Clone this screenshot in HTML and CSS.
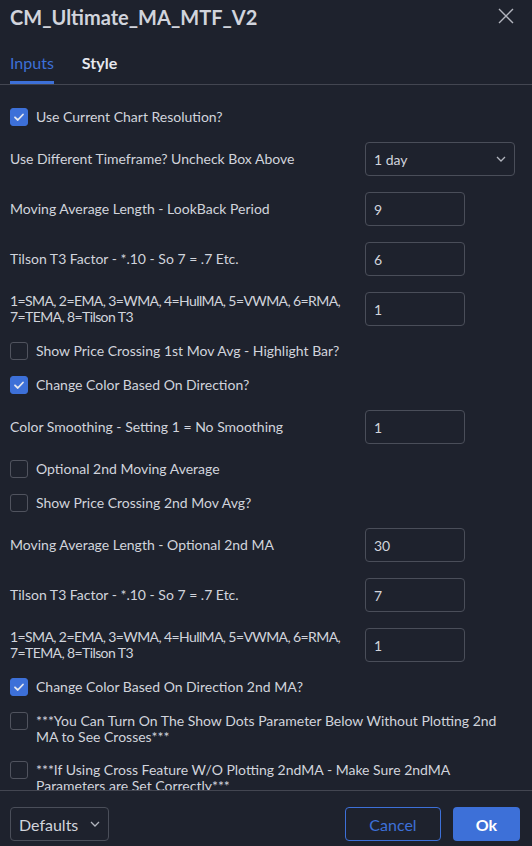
FILE: index.html
```html
<!DOCTYPE html>
<html>
<head>
<meta charset="utf-8">
<link rel="stylesheet" href="styles.css">
</head>
<body>
<div class="dialog">
  <header class="header">
    <h1 class="title">CM_Ultimate_MA_MTF_V2</h1>
    <span class="close"><svg width="16" height="16" viewBox="0 0 16 16"><path d="M1 1L15 15M15 1L1 15" stroke="#b2b5be" stroke-width="1.4" fill="none"/></svg></span>
  </header>
  <nav class="tabs">
    <span class="tab active">Inputs</span>
    <span class="tab">Style</span>
  </nav>
  <main class="content">
    <div class="check-row"><span class="box checked"><svg width="18" height="18" viewBox="0 0 18 18"><path d="M5 9.3L7.8 12L13 6.5" stroke="#e6e8ee" stroke-width="1.8" fill="none" stroke-linecap="round" stroke-linejoin="round"/></svg></span><span class="check-label">Use Current Chart Resolution?</span></div>
    <div class="field-row"><span class="field-label">Use Different Timeframe? Uncheck Box Above</span><div class="select"><span>1 day</span><svg width="10" height="6" viewBox="0 0 10 6"><path d="M1 1L5 5L9 1" stroke="#b2b5be" stroke-width="1.3" fill="none"/></svg></div></div>
    <div class="field-row"><span class="field-label">Moving Average Length - LookBack Period</span><div class="input">9</div></div>
    <div class="field-row"><span class="field-label">Tilson T3 Factor - *.10 - So 7 = .7 Etc.</span><div class="input">6</div></div>
    <div class="field-row"><span class="field-label nowrap tight">1=SMA, 2=EMA, 3=WMA, 4=HullMA, 5=VWMA, 6=RMA,<br>7=TEMA, 8=Tilson T3</span><div class="input">1</div></div>
    <div class="check-row"><span class="box"></span><span class="check-label">Show Price Crossing 1st Mov Avg - Highlight Bar?</span></div>
    <div class="check-row"><span class="box checked"><svg width="18" height="18" viewBox="0 0 18 18"><path d="M5 9.3L7.8 12L13 6.5" stroke="#e6e8ee" stroke-width="1.8" fill="none" stroke-linecap="round" stroke-linejoin="round"/></svg></span><span class="check-label">Change Color Based On Direction?</span></div>
    <div class="field-row"><span class="field-label">Color Smoothing - Setting 1 = No Smoothing</span><div class="input">1</div></div>
    <div class="check-row"><span class="box"></span><span class="check-label">Optional 2nd Moving Average</span></div>
    <div class="check-row"><span class="box"></span><span class="check-label">Show Price Crossing 2nd Mov Avg?</span></div>
    <div class="field-row"><span class="field-label">Moving Average Length - Optional 2nd MA</span><div class="input">30</div></div>
    <div class="field-row"><span class="field-label">Tilson T3 Factor - *.10 - So 7 = .7 Etc.</span><div class="input">7</div></div>
    <div class="field-row"><span class="field-label nowrap tight">1=SMA, 2=EMA, 3=WMA, 4=HullMA, 5=VWMA, 6=RMA,<br>7=TEMA, 8=Tilson T3</span><div class="input">1</div></div>
    <div class="check-row"><span class="box checked"><svg width="18" height="18" viewBox="0 0 18 18"><path d="M5 9.3L7.8 12L13 6.5" stroke="#e6e8ee" stroke-width="1.8" fill="none" stroke-linecap="round" stroke-linejoin="round"/></svg></span><span class="check-label">Change Color Based On Direction 2nd MA?</span></div>
    <div class="check-row"><span class="box"></span><span class="check-label nowrap">***You Can Turn On The Show Dots Parameter Below Without Plotting 2nd<br>MA to See Crosses***</span></div>
    <div class="check-row"><span class="box"></span><span class="check-label nowrap">***If Using Cross Feature W/O Plotting 2ndMA - Make Sure 2ndMA<br>Parameters are Set Correctly***</span></div>
  </main>
  <footer class="footer">
    <div class="btn defaults"><span>Defaults</span><svg width="10" height="6" viewBox="0 0 10 6"><path d="M1 1L5 5L9 1" stroke="#b2b5be" stroke-width="1.3" fill="none"/></svg></div>
    <div class="actions">
      <div class="btn cancel">Cancel</div>
      <div class="btn ok">Ok</div>
    </div>
  </footer>
</div>
</body>
</html>
```

FILE: styles.css
```css
* { box-sizing: border-box; }

html, body {
  margin: 0;
  height: 846px;
  overflow: hidden;
  background: #1e222d;
}

body {
  font-family: Lato, "Noto Sans", sans-serif;
  color: #d1d4dc;
  font-size: 14px;
}

.dialog {
  height: 846px;
  display: flex;
  flex-direction: column;
}

.header {
  flex: 0 0 34px;
  display: flex;
  align-items: center;
  justify-content: space-between;
  padding: 0 18px 0 10px;
}

.title {
  margin: 0;
  font-size: 20px;
  font-weight: 700;
  line-height: 34px;
  color: #d1d4dc;
}

.close {
  display: flex;
  width: 16px;
  height: 16px;
  margin-top: -2px;
}

.tabs {
  flex: 0 0 51px;
  display: flex;
  gap: 28px;
  padding: 17px 10px 0;
  border-bottom: 1px solid #434651;
}

.tab {
  font-size: 16px;
  font-weight: 700;
  line-height: 24px;
  padding-bottom: 6px;
  border-bottom: 3px solid transparent;
  color: #e6e8ee;
}

.tab.active {
  color: #3d70d8;
  font-weight: 400;
  border-bottom-color: #3d70d8;
}

.content {
  flex: 1 1 auto;
  min-height: 0;
  overflow: hidden;
  padding: 23px 17px 0 10px;
  display: flex;
  flex-direction: column;
  gap: 16px;
}

.check-row {
  flex-shrink: 0;
  display: flex;
  align-items: flex-start;
  gap: 8px;
}

.box {
  flex: 0 0 18px;
  width: 18px;
  height: 18px;
  border: 1px solid #50535e;
  border-radius: 3px;
  display: flex;
}

.box.checked {
  background: #3d70d8;
  border-color: #3d70d8;
}

.box.checked svg {
  margin: -1px;
}

.check-label {
  line-height: 16px;
  padding-top: 1px;
}

.nowrap {
  white-space: nowrap;
}

.tight {
  letter-spacing: -0.6px;
}

.field-row {
  flex-shrink: 0;
  display: grid;
  grid-template-columns: 345px auto;
  column-gap: 10px;
  align-items: center;
  justify-items: start;
}

.field-label {
  line-height: 16px;
}

.input, .select {
  height: 34px;
  border: 1px solid #4a4e59;
  border-radius: 4px;
  display: flex;
  align-items: center;
  padding: 0 8px;
  color: #d1d4dc;
}

.input { width: 100px; }

.select {
  width: 150px;
  justify-content: space-between;
}

.footer {
  flex: 0 0 56px;
  border-top: 1px solid #434651;
  padding: 16px 12px 0 10px;
  display: flex;
  justify-content: space-between;
  align-items: flex-start;
}

.actions {
  display: flex;
  gap: 12px;
}

.btn {
  height: 34px;
  border-radius: 4px;
  font-size: 16px;
  display: flex;
  align-items: center;
  justify-content: center;
}

.defaults {
  width: 99px;
  border: 1px solid #4a4e59;
  justify-content: flex-start;
  padding: 0 7px 0 8px;
  gap: 12px;
  color: #d1d4dc;
}

.cancel {
  width: 96px;
  border: 1px solid #3d70d8;
  color: #3d70d8;
}

.ok {
  width: 67px;
  background: #3d70d8;
  color: #ffffff;
  font-weight: 700;
}
```
